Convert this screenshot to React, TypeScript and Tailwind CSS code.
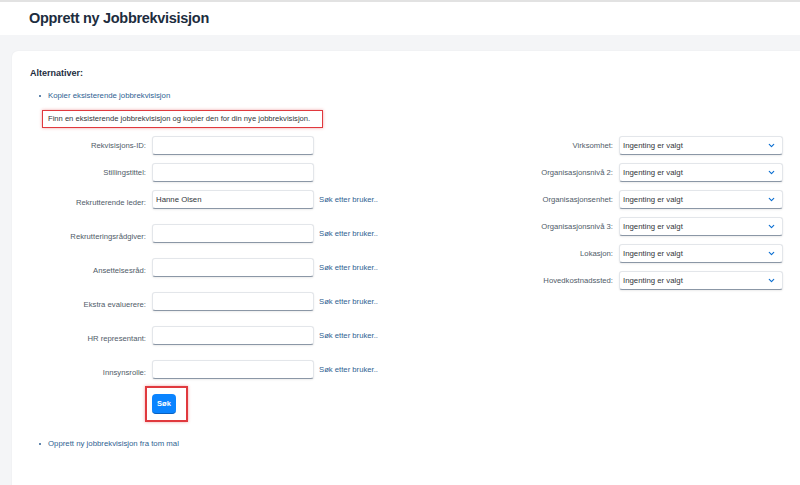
import { ChevronDown } from 'lucide-react';

const leftRows = [
  { label: 'Rekvisisjons-ID:', value: '', search: false },
  { label: 'Stillingstittel:', value: '', search: false },
  { label: 'Rekrutterende leder:', value: 'Hanne Olsen', search: true },
  { label: 'Rekrutteringsrådgiver:', value: '', search: true },
  { label: 'Ansettelsesråd:', value: '', search: true },
  { label: 'Ekstra evaluerere:', value: '', search: true },
  { label: 'HR representant:', value: '', search: true },
  { label: 'Innsynsrolle:', value: '', search: true },
];

const rightRows = [
  'Virksomhet:',
  'Organisasjonsnivå 2:',
  'Organisasjonsenhet:',
  'Organisasjonsnivå 3:',
  'Lokasjon:',
  'Hovedkostnadssted:',
];

const fieldBox =
  'h-[19px] bg-white border border-[#e3e6ea] border-b-[#8b97a6] rounded-[3px] shadow-[0_1px_2px_rgba(0,0,0,0.08)] flex items-center px-[3px] text-[7.8px] text-[#32363a]';

export default function App() {
  return (
    <div className="w-[800px] h-[485px] overflow-hidden bg-[#f4f5f7] border-t-2 border-[#e2e2e2] font-['Liberation_Sans',Arial,sans-serif]">
      <header className="h-[33px] bg-white flex items-center pl-[29px]">
        <h1 className="text-[14.5px] font-bold tracking-[-0.3px] text-[#1d2d3e]">Opprett ny Jobbrekvisisjon</h1>
      </header>

      <main className="pl-3 pt-4">
        <div className="h-[440px] bg-white rounded-tl-md shadow-[0_0_2px_rgba(0,0,0,0.06)] pl-[18px] pt-4">
          <h2 className="text-[9px] leading-3 font-bold text-[#1d2d3e]">Alternativer:</h2>

          <ul className="mt-[11px]">
            <li className="flex items-center h-3 text-[7.8px] text-[#2f5f92]">
              <span className="ml-[9px] w-[2px] h-[2px] rounded-full bg-[#2f5f92]" />
              <span className="ml-[7px]">Kopier eksisterende jobbrekvisisjon</span>
            </li>
          </ul>

          <div className="mt-2 ml-3 w-[281px] h-[18px] border-[1.5px] border-[#e0393e] shadow-[0_0_3px_rgba(224,57,62,0.45)] flex items-center pl-[5px] text-[7.6px] text-[#32363a] whitespace-nowrap">
            Finn en eksisterende jobbrekvisisjon og kopier den for din nye jobbrekvisisjon.
          </div>

          <div className="mt-2 flex">
            <div className="w-[350px]">
              {leftRows.map((r) => (
                <div key={r.label} className={`flex items-center h-[19px] ${r.search ? 'mb-[15px]' : 'mb-2'}`}>
                  <span className={`w-[116px] text-right text-[7.7px] text-[#4f5b68] whitespace-nowrap ${r.search ? 'pt-[6px]' : ''}`}>
                    {r.label}
                  </span>
                  <div className={`ml-[6px] w-[162px] ${fieldBox}`}>{r.value}</div>
                  {r.search && (
                    <span className="ml-[5px] text-[7.7px] text-[#2f5f92] whitespace-nowrap">Søk etter bruker..</span>
                  )}
                </div>
              ))}

              <div className="-mt-2 ml-[115px] w-[43px] h-[36px] border-2 border-[#e0393e] shadow-[0_0_3px_rgba(224,57,62,0.45)] pl-[5px] pt-[6px]">
                <button className="w-6 h-5 rounded-[4px] bg-[#0a84ff] border-b border-[#0760c0] text-white text-[7.5px] font-bold flex items-center justify-center">
                  Søk
                </button>
              </div>

              <ul className="mt-4">
                <li className="flex items-center h-3 text-[7.8px] text-[#2f5f92]">
                  <span className="ml-[9px] w-[2px] h-[2px] rounded-full bg-[#2f5f92]" />
                  <span className="ml-[7px]">Opprett ny jobbrekvisisjon fra tom mal</span>
                </li>
              </ul>
            </div>

            <div className="w-[404px]">
              {rightRows.map((label) => (
                <div key={label} className="flex items-center h-[19px] mb-2">
                  <span className="w-[233px] text-right text-[7.7px] text-[#4f5b68] whitespace-nowrap">{label}</span>
                  <div className={`ml-[6px] w-[164px] justify-between ${fieldBox}`}>
                    <span>Ingenting er valgt</span>
                    <ChevronDown className="w-[9px] h-[9px] mr-[3px] text-[#0a6ed1]" strokeWidth={3} />
                  </div>
                </div>
              ))}
            </div>
          </div>
        </div>
      </main>
    </div>
  );
}
